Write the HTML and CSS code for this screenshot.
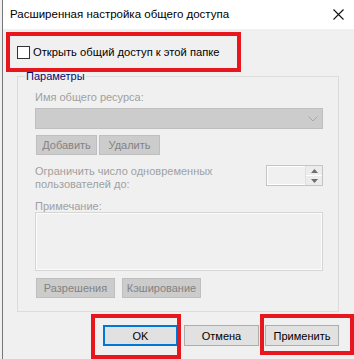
FILE: index.html
```html
<!DOCTYPE html>
<html lang="ru">
<head>
    <meta charset="UTF-8">
    <meta name="viewport" content="width=device-width, initial-scale=1.0">
    <title>Расширенная настройка общего доступа</title>
    <link rel="stylesheet" href="styles.css">
</head>
<body>
    <div class="window">
        <!-- Заголовок окна -->
        <div class="titlebar">
            <span class="title">Расширенная настройка общего доступа</span>
            <svg class="close" width="11" height="11" viewBox="0 0 11 11">
                <path d="M0.5 0.5 L10.5 10.5 M10.5 0.5 L0.5 10.5" stroke="#111" stroke-width="1.1" fill="none"/>
            </svg>
        </div>

        <div class="content">
            <label class="share-row">
                <span class="checkbox"></span>
                <span>Открыть общий доступ к этой папке</span>
            </label>

            <!-- Группа "Параметры" -->
            <div class="group">
                <div class="group-title">Параметры</div>

                <div class="field-label">Имя общего ресурса:</div>
                <div class="combo">
                    <svg width="10" height="6" viewBox="0 0 10 6">
                        <path d="M0.5 0.5 L5 5 L9.5 0.5" stroke="#a6a6a6" fill="none"/>
                    </svg>
                </div>
                <div class="btn-row">
                    <span class="btn-disabled small">Добавить</span>
                    <span class="btn-disabled small">Удалить</span>
                </div>

                <div class="limit-row">
                    <div class="limit-text">Ограничить число одновременных<br>пользователей до:</div>
                    <div class="spinner">
                        <div class="spin-field"></div>
                        <div class="spin-buttons">
                            <div class="spin-btn"><svg width="7" height="4" viewBox="0 0 7 4"><path d="M0 4 L3.5 0 L7 4 Z" fill="#6e6e6e"/></svg></div>
                            <div class="spin-btn"><svg width="7" height="4" viewBox="0 0 7 4"><path d="M0 0 L3.5 4 L7 0 Z" fill="#6e6e6e"/></svg></div>
                        </div>
                    </div>
                </div>

                <div class="note-label">Примечание:</div>
                <div class="note"></div>

                <div class="btn-row bottom">
                    <span class="btn-disabled wide">Разрешения</span>
                    <span class="btn-disabled wide">Кэширование</span>
                </div>
            </div>

            <div class="dialog-buttons">
                <span class="btn btn-default">OK</span>
                <span class="btn">Отмена</span>
                <span class="btn apply">Применить</span>
            </div>
        </div>

        <!-- Красные рамки-пометки поверх окна -->
        <div class="mark mark-share"></div>
        <div class="mark mark-ok"></div>
        <div class="mark mark-apply"></div>
    </div>
</body>
</html>
```

FILE: styles.css
```css
body {
    margin: 0;
    background-color: #f0f0f0;
    font-family: "Liberation Sans", Arial, sans-serif;
    font-size: 11px;
    color: #000;
    overflow: hidden;
}
.window {
    position: relative;
    margin-left: 2px;
    border-left: 1px solid #767676;
    height: 359px;
    background-color: #f0f0f0;
}
.titlebar {
    height: 29px;
    background-color: #fff;
    display: flex;
    align-items: center;
    justify-content: space-between;
    padding: 0 10px 0 7px;
}
.title {
    font-size: 11.5px;
    line-height: 15px;
    margin-top: -1px;
}
.close {
    margin-top: -1px;
}
.content {
    display: flex;
    flex-direction: column;
}
.share-row {
    display: flex;
    align-items: center;
    gap: 3px;
    margin: 17px 0 0 14px;
    height: 13px;
    line-height: 15px;
    font-size: 11.2px;
}
.checkbox {
    width: 11px;
    height: 11px;
    border: 1px solid #333;
    background-color: #fff;
    flex-shrink: 0;
}
.group {
    margin: 17px 0 0 14px;
    width: 322px;
    box-sizing: border-box;
    border: 1px solid #dcdcdc;
    padding: 0 15px 13px 17px;
    display: flex;
    flex-direction: column;
    color: #a0a0a0;
}
.group-title {
    width: fit-content;
    margin: -8px 0 0 -10px;
    padding: 0 1px;
    background-color: #f0f0f0;
    color: #0a0a6e;
    line-height: 15px;
}
.field-label {
    margin-top: 6px;
    line-height: 15px;
}
.combo {
    margin-top: 3px;
    height: 21px;
    box-sizing: border-box;
    background-color: #cccccc;
    border: 1px solid #bfbfbf;
    display: flex;
    align-items: center;
    justify-content: flex-end;
    padding-right: 4px;
}
.btn-row {
    display: flex;
    gap: 2px;
    margin-top: 6px;
    margin-left: 1px;
}
.btn-row.bottom {
    gap: 7px;
    margin-top: 7px;
}
.btn-disabled {
    height: 20px;
    box-sizing: border-box;
    background-color: #cccccc;
    border: 1px solid #bfbfbf;
    color: #838383;
    display: flex;
    align-items: center;
    justify-content: center;
}
.small {
    width: 61px;
}
.wide {
    width: 79px;
}
.limit-row {
    display: flex;
    justify-content: space-between;
    align-items: flex-start;
    margin-top: 10px;
}
.limit-text {
    line-height: 13px;
}
.spinner {
    width: 57px;
    height: 21px;
    box-sizing: border-box;
    border: 1px solid #c4c4c4;
    display: flex;
}
.spin-field {
    flex: 1;
    border: 1px solid #fff;
    border-right: none;
}
.spin-buttons {
    width: 16px;
    display: flex;
    flex-direction: column;
    border-left: 1px solid #e0e0e0;
}
.spin-btn {
    flex: 1;
    display: flex;
    align-items: center;
    justify-content: center;
    background-color: #ececec;
}
.spin-btn + .spin-btn {
    border-top: 1px solid #fff;
}
.note-label {
    margin-top: 9px;
    line-height: 12px;
}
.note {
    height: 59px;
    box-sizing: border-box;
    border: 1px solid #d5d5d5;
    box-shadow: inset 0 0 0 1px #fbfbfb;
    background-color: #f0f0f0;
}
.dialog-buttons {
    display: flex;
    justify-content: flex-end;
    gap: 6px;
    margin: 13px 15px 0 0;
}
.btn {
    width: 75px;
    height: 21px;
    box-sizing: border-box;
    background-color: #e1e1e1;
    border: 1px solid #adadad;
    display: flex;
    align-items: center;
    justify-content: center;
}
.btn-default {
    border: 2px solid #0078d7;
}
.apply {
    width: 74px;
}
.mark {
    position: absolute;
    border: 4px solid #e8171e;
    box-sizing: border-box;
}
.mark-share {
    left: 3px;
    top: 32px;
    width: 235px;
    height: 40px;
}
.mark-ok {
    left: 88px;
    top: 314px;
    width: 90px;
    height: 45px;
}
.mark-apply {
    left: 257px;
    top: 314px;
    width: 94px;
    height: 41px;
}
```
